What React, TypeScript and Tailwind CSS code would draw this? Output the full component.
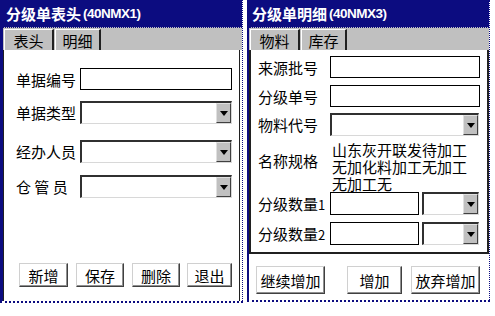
import React from "react";

const NAVY = "bg-[#0c0c80]";

function TextBox({ className = "" }: { className?: string }) {
  return <div className={`h-[22px] border border-black bg-white ${className}`} />;
}

function Combo({ className = "" }: { className?: string }) {
  return (
    <div
      className={`flex h-[23px] border-t-2 border-l-2 border-b border-r border-t-[#303030] border-l-[#303030] border-b-[#d8d8d8] border-r-[#d8d8d8] bg-white ${className}`}
    >
      <div className="flex-1" />
      <div className="flex w-[15px] items-center justify-center border border-t-[#e0e0e0] border-l-[#e0e0e0] border-b-[#404040] border-r-[#404040] bg-[#c0c0c0]">
        <div className="h-0 w-0 border-x-[4px] border-t-[5px] border-x-transparent border-t-black" />
      </div>
    </div>
  );
}

function Btn({ label, className = "" }: { label: string; className?: string }) {
  return (
    <div
      className={`flex shrink-0 items-center justify-center whitespace-nowrap border border-t-[#d0d0d0] border-l-[#d0d0d0] border-b-[#404040] border-r-[#404040] bg-white text-[15px] leading-none shadow-[inset_-1px_-1px_0_#909090] ${className}`}
    >
      {label}
    </div>
  );
}

function Title({ main, code }: { main: string; code: string }) {
  return (
    <div className={`flex h-[27px] items-center whitespace-nowrap ${NAVY} pl-[3px] text-white`}>
      <span className="text-[15px] font-bold leading-none">{main}</span>
      <span className="ml-[2px] font-['Liberation_Sans',sans-serif] text-[13.5px] font-bold leading-none tracking-[-0.5px]">
        {code}
      </span>
    </div>
  );
}

function Tabs({ tabs }: { tabs: string[] }) {
  return (
    <div className="flex h-[23px] items-end border-t border-dotted border-[#0c0c80] bg-[#c0c0c0] pl-[1px]">
      {tabs.map((t, i) => (
        <div
          key={t}
          className={`flex h-[21px] items-center justify-center whitespace-nowrap border-t border-l border-r-2 border-t-white border-l-white border-r-[#202020] text-[15px] leading-none ${
            i === 0 ? "w-[50px]" : "ml-[1px] w-[46px]"
          }`}
        >
          {t}
        </div>
      ))}
    </div>
  );
}

function Label({ children, className = "" }: { children: React.ReactNode; className?: string }) {
  return <div className={`shrink-0 whitespace-nowrap text-[15px] leading-none ${className}`}>{children}</div>;
}

export default function App() {
  return (
    <div className="flex h-[316px] w-[495px] bg-white font-['Noto_Sans_CJK_SC',sans-serif] text-black">
      {/* 表头 */}
      <div className="flex h-[303px] w-[243px] flex-col border-l-[3px] border-r border-b-2 border-dotted border-[#0c0c80] [border-left-style:solid]">
        <Title main="分级单表头" code="(40NMX1)" />
        <Tabs tabs={["表头", "明细"]} />
        <div className="mr-[2px] flex flex-1 flex-col border-r border-l border-r-[#202020] border-l-[#202020] bg-white pb-[14px] pl-[12px] pr-[5px] pt-[18px]">
          <div className="flex items-center">
            <Label className="w-[64px]">单据编号</Label>
            <TextBox className="w-[152px]" />
          </div>
          <div className="mt-[11px] flex items-center">
            <Label className="w-[64px]">单据类型</Label>
            <Combo className="w-[152px]" />
          </div>
          <div className="mt-[16px] flex items-center">
            <Label className="w-[64px]">经办人员</Label>
            <Combo className="w-[152px]" />
          </div>
          <div className="mt-[12px] flex items-center">
            <Label className="w-[64px]">仓 管 员</Label>
            <Combo className="w-[152px]" />
          </div>
          <div className="mt-auto flex gap-[8px] pl-[3px]">
            <Btn label="新增" className="h-[24px] w-[49px]" />
            <Btn label="保存" className="h-[24px] w-[48px]" />
            <Btn label="删除" className="h-[24px] w-[48px]" />
            <Btn label="退出" className="ml-[-1px] h-[24px] w-[45px]" />
          </div>
        </div>
      </div>

      {/* 明细 */}
      <div className="ml-[4px] flex h-[302px] w-[243px] flex-col border-l-2 border-r border-b-2 border-dotted border-[#0c0c80] [border-left-style:solid]">
        <Title main="分级单明细" code="(40NMX3)" />
        <Tabs tabs={["物料", "库存"]} />
        <div className="flex h-[204px] flex-col border-x-2 border-b-2 border-x-[#202020] border-b-[#202020] bg-white pl-[7px] pr-[5px] pt-[6px]">
          <div className="flex items-center">
            <Label className="w-[72px]">来源批号</Label>
            <TextBox className="w-[150px]" />
          </div>
          <div className="mt-[7px] flex items-center">
            <Label className="w-[72px]">分级单号</Label>
            <TextBox className="w-[150px]" />
          </div>
          <div className="mt-[6px] flex items-center">
            <Label className="w-[72px]">物料代号</Label>
            <Combo className="w-[149px]" />
          </div>
          <div className="mt-[5px] flex">
            <Label className="mt-[12px] w-[74px]">名称规格</Label>
            <div className="w-[140px] text-[15px] leading-[17px]">
              山东灰开联发待加工
              <br />
              无加化料加工无加工
              <br />
              无加工无
            </div>
          </div>
          <div className="flex items-center">
            <Label className="w-[72px]">
              分级数量<span className="text-[13px]">1</span>
            </Label>
            <TextBox className="h-[23px] w-[89px]" />
            <Combo className="ml-[3px] w-[57px]" />
          </div>
          <div className="mt-[7px] flex items-center">
            <Label className="w-[72px]">
              分级数量<span className="text-[13px]">2</span>
            </Label>
            <TextBox className="h-[23px] w-[89px]" />
            <Combo className="ml-[3px] w-[57px]" />
          </div>
        </div>
        <div className="flex flex-1 items-start bg-white pl-[7px] pt-[12px]">
          <Btn label="继续增加" className="h-[28px] w-[69px]" />
          <Btn label="增加" className="ml-[22px] h-[28px] w-[55px]" />
          <Btn label="放弃增加" className="ml-[9px] h-[28px] w-[69px]" />
        </div>
      </div>
    </div>
  );
}
